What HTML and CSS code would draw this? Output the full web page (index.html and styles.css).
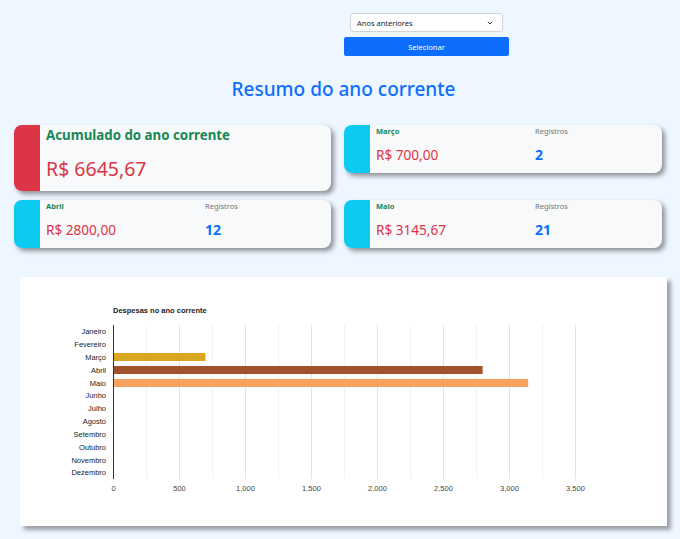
FILE: index.html
```html
<!DOCTYPE html>
<html lang="pt-BR">
<head>
<meta charset="utf-8">
<title>Resumo</title>
<link rel="stylesheet" href="styles.css">
</head>
<body>
<div class="page">
  <form class="filter">
    <div class="select">
      <span>Anos anteriores</span>
      <svg class="chev" width="6" height="4" viewBox="0 0 6 4"><path d="M0.8 0.8l2.2 2.2l2.2-2.2" fill="none" stroke="#343a40" stroke-width="1"/></svg>
    </div>
    <button type="button" class="btn">Selecionar</button>
  </form>

  <h1 class="title">Resumo do ano corrente</h1>

  <div class="cards">
    <div class="card big">
      <div class="stripe red"></div>
      <div class="card-body">
        <div class="big-title">Acumulado do ano corrente</div>
        <div class="big-value">R$ 6645,67</div>
      </div>
    </div>
    <div class="card">
      <div class="stripe cyan"></div>
      <div class="card-body cols">
        <div class="month">Março</div>
        <div class="reg">Registros</div>
        <div class="value">R$ 700,00</div>
        <div class="count">2</div>
      </div>
    </div>
    <div class="card">
      <div class="stripe cyan"></div>
      <div class="card-body cols">
        <div class="month">Abril</div>
        <div class="reg">Registros</div>
        <div class="value">R$ 2800,00</div>
        <div class="count">12</div>
      </div>
    </div>
    <div class="card">
      <div class="stripe cyan"></div>
      <div class="card-body cols">
        <div class="month">Maio</div>
        <div class="reg">Registros</div>
        <div class="value">R$ 3145,67</div>
        <div class="count">21</div>
      </div>
    </div>
  </div>

  <div class="chart-box">
    <svg class="chart" width="647" height="249" viewBox="0 0 647 249">
      <text class="ctitle" x="93" y="36">Despesas no ano corrente</text>
      <g class="grid-minor">
        <line x1="126.5" y1="48" x2="126.5" y2="202"/>
        <line x1="192.5" y1="48" x2="192.5" y2="202"/>
        <line x1="258.5" y1="48" x2="258.5" y2="202"/>
        <line x1="324.5" y1="48" x2="324.5" y2="202"/>
        <line x1="390.5" y1="48" x2="390.5" y2="202"/>
        <line x1="456.5" y1="48" x2="456.5" y2="202"/>
        <line x1="522.5" y1="48" x2="522.5" y2="202"/>
      </g>
      <g class="grid-major">
        <line x1="159.5" y1="48" x2="159.5" y2="202"/>
        <line x1="225.5" y1="48" x2="225.5" y2="202"/>
        <line x1="291.5" y1="48" x2="291.5" y2="202"/>
        <line x1="357.5" y1="48" x2="357.5" y2="202"/>
        <line x1="423.5" y1="48" x2="423.5" y2="202"/>
        <line x1="489.5" y1="48" x2="489.5" y2="202"/>
        <line x1="555.5" y1="48" x2="555.5" y2="202"/>
      </g>
      <rect x="93" y="76" width="92.4" height="8" fill="#daa520"/>
      <rect x="93" y="89" width="369.6" height="8" fill="#a0522d"/>
      <rect x="93" y="102" width="415.2" height="8" fill="#f4a460"/>
      <line class="axis" x1="93.5" y1="48" x2="93.5" y2="202"/>
      <g class="ylab">
        <text x="86" y="57">Janeiro</text>
        <text x="86" y="70">Fevereiro</text>
        <text x="86" y="83">Março</text>
        <text x="86" y="96">Abril</text>
        <text x="86" y="108.5">Maio</text>
        <text x="86" y="121">Junho</text>
        <text x="86" y="134">Julho</text>
        <text x="86" y="147">Agosto</text>
        <text x="86" y="160">Setembro</text>
        <text x="86" y="173">Outubro</text>
        <text x="86" y="186">Novembro</text>
        <text x="86" y="198">Dezembro</text>
      </g>
      <g class="xlab">
        <text x="93.5" y="214">0</text>
        <text x="159.5" y="214">500</text>
        <text x="225.5" y="214">1,000</text>
        <text x="291.5" y="214">1,500</text>
        <text x="357.5" y="214">2,000</text>
        <text x="423.5" y="214">2,500</text>
        <text x="489.5" y="214">3,000</text>
        <text x="555.5" y="214">3,500</text>
      </g>
    </svg>
  </div>
</div>
</body>
</html>
```

FILE: styles.css
```css
* { box-sizing: border-box; }

html, body {
  margin: 0;
  padding: 0;
  background: #eef6ff;
}

body {
  font-family: "Noto Sans", "DejaVu Sans", sans-serif;
  width: 680px;
  height: 539px;
  overflow: hidden;
}

.page {
  padding-top: 13px;
}

.filter {
  width: 165px;
  margin: 0 0 0 344px;
  display: flex;
  flex-direction: column;
  gap: 5px;
}

.select {
  margin: 0 6px;
  height: 19px;
  background: #fff;
  border: 1px solid #ced4da;
  border-radius: 3px;
  display: flex;
  align-items: center;
  justify-content: space-between;
  padding: 0 9px 0 6px;
  font-size: 7.5px;
  color: #212529;
}

.chev { display: block; }

.btn {
  height: 19px;
  border: none;
  border-radius: 2px;
  background: #0d6efd;
  color: #fff;
  font-family: inherit;
  font-size: 7.5px;
  padding: 0;
}

.title {
  margin: 21px 0 0 7px;
  text-align: center;
  font-size: 19px;
  font-weight: 500;
  color: #0d6efd;
  line-height: 24px;
}

.cards {
  display: grid;
  grid-template-columns: 317px 318px;
  column-gap: 13px;
  row-gap: 9px;
  align-items: start;
  margin: 24px 0 0 14px;
}

.card {
  display: flex;
  height: 48px;
  background: #f8f9fa;
  border-radius: 8px;
  overflow: hidden;
  box-shadow: 3px 3px 5px rgba(0, 0, 0, 0.42);
}

.card.big { height: 66px; }

.stripe { width: 26px; flex: none; }
.stripe.red { background: #dc3545; }
.stripe.cyan { background: #0dcaf0; }

.card-body {
  flex: 1;
  padding-left: 6px;
}

.big-title {
  margin-top: 1px;
  font-size: 13.3px;
  font-weight: 700;
  color: #198754;
  line-height: 18px;
}

.big-value {
  margin-top: 13px;
  font-size: 19.5px;
  color: #dc3545;
  line-height: 24px;
}

.cols {
  display: grid;
  grid-template-columns: 159px 1fr;
  grid-template-rows: 14px 1fr;
}

.month {
  font-size: 7.5px;
  font-weight: 700;
  color: #198754;
  line-height: 10px;
  padding-top: 1px;
}

.reg {
  font-size: 7.5px;
  color: #6c757d;
  line-height: 10px;
  padding-top: 1px;
}

.value {
  font-size: 13.6px;
  color: #dc3545;
  line-height: 18px;
  padding-top: 7px;
}

.count {
  font-size: 14px;
  font-weight: 700;
  color: #0d6efd;
  line-height: 18px;
  padding-top: 7px;
}

.chart-box {
  margin: 29px 0 0 20px;
  width: 647px;
  height: 249px;
  background: #fff;
  box-shadow: 4px 4px 4px rgba(0, 0, 0, 0.35);
}

.chart { display: block; font-family: "Liberation Sans", Arial, sans-serif; }

.ctitle { font-size: 7.5px; font-weight: 700; fill: #222; }

.grid-minor line { stroke: #f2f2f2; stroke-width: 1; }
.grid-major line { stroke: #e3e3e3; stroke-width: 1; }
.axis { stroke: #333; stroke-width: 1; }

.ylab text { font-size: 7.5px; fill: #222; text-anchor: end; }
.xlab text { font-size: 7.5px; fill: #444; text-anchor: middle; }
```
